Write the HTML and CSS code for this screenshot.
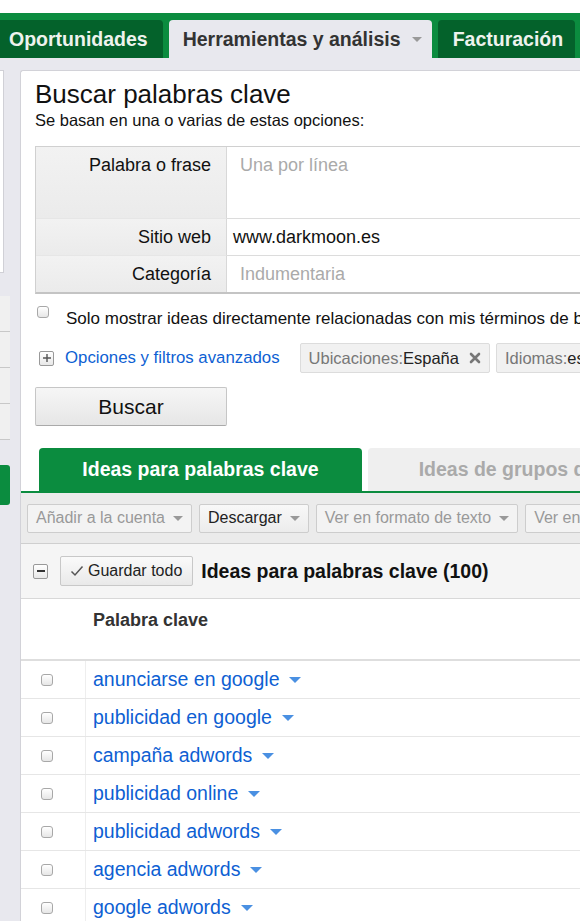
FILE: index.html
```html
<!DOCTYPE html>
<html lang="es">
<head>
<meta charset="utf-8">
<title>Buscar palabras clave</title>
<link rel="stylesheet" href="styles.css">
</head>
<body>
<div class="page">
  <div class="topwhite"></div>
  <nav class="navbar">
    <div class="navtab dark">Oportunidades</div>
    <div class="navtab active">Herramientas y análisis <span class="caret gray"></span></div>
    <div class="navtab dark">Facturación</div>
  </nav>
  <div class="layout">
    <aside class="sidebar">
      <div class="side-white"></div>
      <div class="side-items">
        <div class="side-item"></div>
        <div class="side-item"></div>
        <div class="side-item"></div>
        <div class="side-item"></div>
      </div>
      <div class="side-green"></div>
    </aside>
    <main class="panel">
      <section class="search">
        <h1 class="title">Buscar palabras clave</h1>
        <p class="subtitle">Se basan en una o varias de estas opciones:</p>
        <div class="form">
          <div class="label tall">Palabra o frase</div>
          <div class="field tall placeholder">Una por línea</div>
          <div class="label">Sitio web</div>
          <div class="field">www.darkmoon.es</div>
          <div class="label last">Categoría</div>
          <div class="field placeholder last">Indumentaria</div>
        </div>
        <div class="check-row">
          <span class="checkbox"></span>
          <span class="check-text">Solo mostrar ideas directamente relacionadas con mis términos de búsqueda</span>
        </div>
        <div class="options-row">
          <span class="plusbox">
            <svg width="10" height="10" viewBox="0 0 10 10"><path d="M5 1v8M1 5h8" stroke="#555" stroke-width="1.4"/></svg>
          </span>
          <a class="link options-link">Opciones y filtros avanzados</a>
          <span class="chip">Ubicaciones:<b>España</b>
            <svg class="chip-x" width="12" height="12" viewBox="0 0 12 12"><path d="M2 2l8 8M10 2l-8 8" stroke="#777" stroke-width="2.6" stroke-linecap="round"/></svg>
          </span>
          <span class="chip">Idiomas:<b>español</b></span>
        </div>
        <button class="search-btn">Buscar</button>
      </section>

      <section class="results">
        <div class="restabs">
          <div class="restab on">Ideas para palabras clave</div>
          <div class="restab off">Ideas de grupos de anuncios</div>
        </div>
        <div class="toolbar">
          <span class="tbtn disabled">Añadir a la cuenta <span class="caret gray"></span></span>
          <span class="tbtn">Descargar <span class="caret gray"></span></span>
          <span class="tbtn disabled">Ver en formato de texto <span class="caret gray"></span></span>
          <span class="tbtn disabled">Ver en tabla <span class="caret gray"></span></span>
        </div>
        <div class="saverow">
          <span class="minusbox">
            <svg width="10" height="10" viewBox="0 0 10 10"><path d="M1 5h8" stroke="#333" stroke-width="2"/></svg>
          </span>
          <span class="save-btn">
            <svg width="14" height="12" viewBox="0 0 14 12"><path d="M1.5 6.5l3.5 3.5 7.5-8.5" fill="none" stroke="#555" stroke-width="1.5"/></svg>
            Guardar todo
          </span>
          <span class="save-title">Ideas para palabras clave (100)</span>
        </div>
        <div class="table">
          <div class="thead">
            <div class="cbcol"></div>
            <div class="kwcol th">Palabra clave</div>
          </div>
          <div class="trow"><div class="cbcol"><span class="checkbox"></span></div><div class="kwcol"><a class="link kw">anunciarse en google</a><span class="caret blue"></span></div></div>
          <div class="trow"><div class="cbcol"><span class="checkbox"></span></div><div class="kwcol"><a class="link kw">publicidad en google</a><span class="caret blue"></span></div></div>
          <div class="trow"><div class="cbcol"><span class="checkbox"></span></div><div class="kwcol"><a class="link kw">campaña adwords</a><span class="caret blue"></span></div></div>
          <div class="trow"><div class="cbcol"><span class="checkbox"></span></div><div class="kwcol"><a class="link kw">publicidad online</a><span class="caret blue"></span></div></div>
          <div class="trow"><div class="cbcol"><span class="checkbox"></span></div><div class="kwcol"><a class="link kw">publicidad adwords</a><span class="caret blue"></span></div></div>
          <div class="trow"><div class="cbcol"><span class="checkbox"></span></div><div class="kwcol"><a class="link kw">agencia adwords</a><span class="caret blue"></span></div></div>
          <div class="trow"><div class="cbcol"><span class="checkbox"></span></div><div class="kwcol"><a class="link kw">google adwords</a><span class="caret blue"></span></div></div>
        </div>
      </section>
    </main>
  </div>
</div>
</body>
</html>
```

FILE: styles.css
```css
* { box-sizing: border-box; }
html, body { margin: 0; padding: 0; }
body {
  width: 580px;
  height: 921px;
  overflow: hidden;
  background: #e8e8ee;
  font-family: "Liberation Sans", Arial, sans-serif;
  color: #111;
}
.page { width: 580px; overflow: hidden; }
.topwhite { height: 13px; background: #fff; }

.navbar {
  height: 45px;
  background: #0b8c3f;
  display: flex;
  align-items: flex-end;
  gap: 6px;
  white-space: nowrap;
}
.navtab {
  height: 38px;
  display: flex;
  align-items: center;
  font-size: 19.5px;
  font-weight: bold;
  border-radius: 4px 4px 0 0;
  flex-shrink: 0;
}
.navtab.dark { background: #04622b; color: #eef3ee; padding: 0 15px 0 9px; }
.navtab.dark:first-child { border-top-left-radius: 0; }
.navtab.dark:last-child { padding: 0 12px 0 15px; }
.navtab.active { background: #e8e8ee; color: #333; padding: 0 14px; width: 263px; }
.navtab.active .caret { margin-left: 11px; }

.caret {
  display: inline-block;
  width: 0; height: 0;
  border-left: 5px solid transparent;
  border-right: 5px solid transparent;
  border-top: 5px solid #999;
  vertical-align: middle;
}
.caret.gray { border-top-color: #999; }
.caret.blue { border-top-color: #4a90e2; border-left-width: 6px; border-right-width: 6px; border-top-width: 6px; margin-left: 10px; }

.layout {
  display: flex;
  gap: 9px;
  padding-top: 12px;
  align-items: flex-start;
}
.sidebar { width: 11px; flex-shrink: 0; display: flex; flex-direction: column; }
.side-white { height: 203px; background: #fff; border: 1px solid #d0d0d6; border-left: 0; width: 4px; }
.side-items { margin-top: 23px; width: 10px; }
.side-item { height: 36px; background: #f0f0f0; border-bottom: 1px solid #c8c8c8; }
.side-green { margin-top: 25px; height: 40px; width: 10px; background: #0b8c3f; border-radius: 0 3px 3px 0; }

.panel {
  flex: 1;
  min-width: 0;
  background: #fff;
  border-left: 1px solid #d2d2d8;
  border-top: 1px solid #d2d2d8;
  border-top-left-radius: 3px;
  height: 860px;
  overflow: hidden;
}
.search { padding: 8px 0 0 14px; width: 900px; }
.title { margin: 0; font-size: 26px; font-weight: normal; line-height: 30px; color: #111; }
.subtitle { margin: 2px 0 0; font-size: 16.5px; line-height: 19px; color: #111; }

.form {
  margin-top: 16px;
  display: grid;
  grid-template-columns: 191px 700px;
  border-top: 1px solid #d0d0d0;
  border-left: 1px solid #d0d0d0;
  border-bottom: 2px solid #c4c4c4;
  font-size: 18px;
}
.label {
  background: linear-gradient(180deg, #f2f2f2, #ebebeb);
  text-align: right;
  padding: 8px 15px 0 0;
  height: 37px;
  color: #111;
  border-right: 1px solid #d8d8d8;
  border-bottom: 1px solid #e6e6e6;
}
.label.tall, .field.tall { height: 72px; }
.field {
  height: 37px;
  padding: 8px 0 0 13px;
  border-bottom: 1px solid #dcdcdc;
  color: #111;
}
.field.last { border-bottom: 0; height: 36px; }
.label.last { border-bottom: 0; height: 36px; }
.field.placeholder { color: #aaa; }
.field:nth-child(4) { padding-left: 6px; }

.check-row { display: flex; align-items: flex-start; margin-top: 12px; white-space: nowrap; font-size: 17px; height: 24px; }
.checkbox {
  display: inline-block;
  width: 12px; height: 12px;
  border: 1px solid #a8a8a8;
  border-radius: 3px;
  background: linear-gradient(180deg, #fff, #e6e6e6);
  flex-shrink: 0;
}
.check-row .checkbox { margin: 0 0 0 2px; }
.check-text { margin-left: 17px; margin-top: 3px; }

.options-row { display: flex; align-items: center; margin-top: 13px; height: 30px; white-space: nowrap; }
.plusbox, .minusbox {
  width: 15px; height: 15px;
  border: 1px solid #999;
  border-radius: 2px;
  background: linear-gradient(180deg, #fff, #e8e8e8);
  display: inline-flex; align-items: center; justify-content: center;
  flex-shrink: 0;
}
.plusbox { margin-left: 4px; }
.link { color: #0e5fd3; text-decoration: none; }
.options-link { font-size: 16.8px; margin-left: 11px; }
.chip {
  margin-left: 20px;
  height: 30px;
  display: inline-flex; align-items: center;
  padding: 0 8px;
  background: #f1f1f1;
  border: 1px solid #dcdcdc;
  border-radius: 2px;
  font-size: 16.5px;
  color: #777;
}
.chip + .chip { margin-left: 6px; }
.chip b { font-weight: normal; color: #222; }
.chip-x { margin-left: 10px; }

.search-btn {
  display: block;
  margin-top: 14px;
  width: 192px; height: 39px;
  font-family: "Liberation Sans", Arial, sans-serif;
  font-size: 21px;
  color: #111;
  background: linear-gradient(180deg, #f6f6f6, #e6e6e6);
  border: 1px solid #c6c6c6;
  border-bottom-color: #aaa;
  border-radius: 2px;
  padding: 0;
}

.results { margin-top: 22px; width: 900px; }
.restabs { display: flex; gap: 6px; padding-left: 18px; height: 43px; align-items: flex-end; }
.restab {
  height: 43px;
  width: 323px;
  display: flex; align-items: center; justify-content: center;
  font-size: 19.5px; font-weight: bold;
  border-radius: 4px 4px 0 0;
  white-space: nowrap;
}
.restab.on { background: #0b8c3f; color: #fff; }
.restab.off { background: #efefef; color: #aaa; width: 370px; }

.toolbar {
  border-top: 2px solid #0b8c3f;
  background: #ebebeb;
  height: 53px;
  border-bottom: 1px solid #cfcfcf;
  display: flex; align-items: center; gap: 7px;
  padding-left: 6px;
  white-space: nowrap;
}
.tbtn {
  height: 29px;
  display: inline-flex; align-items: center; gap: 8px;
  padding: 0 8px;
  font-size: 16px;
  color: #222;
  background: linear-gradient(180deg, #f8f8f8, #ececec);
  border: 1px solid #cdcdcd;
  border-radius: 2px;
}
.tbtn.disabled { color: #999; background: #f3f3f3; }

.saverow {
  height: 55px;
  background: #f5f5f5;
  border-bottom: 1px solid #d8d8d8;
  display: flex; align-items: center;
  padding-left: 12px;
  white-space: nowrap;
}
.save-btn {
  margin-left: 12px;
  height: 30px;
  display: inline-flex; align-items: center; gap: 4px;
  padding: 0 10px 0 9px;
  font-size: 16px;
  color: #222;
  background: linear-gradient(180deg, #fafafa, #e9e9e9);
  border: 1px solid #c8c8c8;
  border-radius: 2px;
}
.save-title { margin-left: 8px; font-size: 19.5px; font-weight: bold; color: #111; }

.table { font-size: 19.5px; }
.thead { display: flex; height: 62px; border-bottom: 2px solid #dedede; }
.th { font-size: 18px; font-weight: bold; color: #333; padding-top: 11px; }
.trow { display: flex; height: 38px; border-bottom: 1px solid #e6e6e6; }
.cbcol { width: 65px; flex-shrink: 0; padding: 7px 0 0 20px; }
.trow .cbcol { border-right: 1px solid #eeeeee; }
.kwcol { padding-left: 7px; display: flex; align-items: center; white-space: nowrap; }
.thead .kwcol { align-items: flex-start; }
.kw { font-size: 19.5px; }
```
